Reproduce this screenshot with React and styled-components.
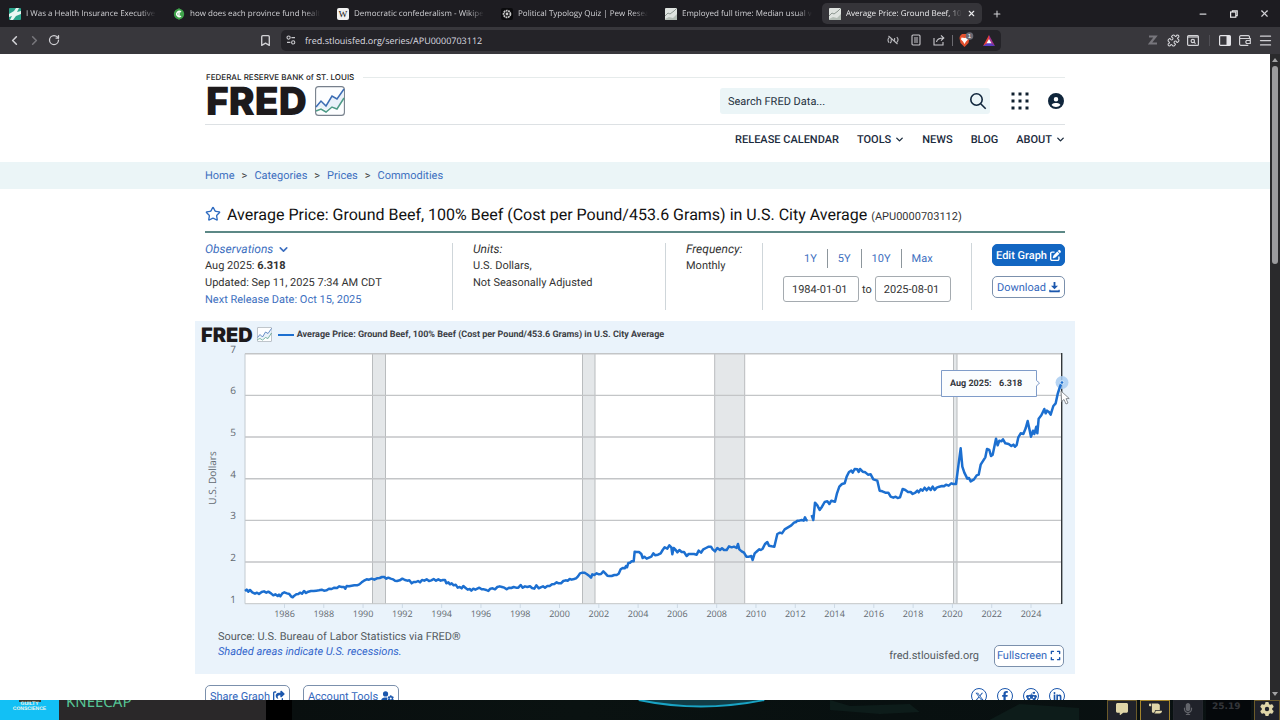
import React from "react";
import styled, { createGlobalStyle, css } from "styled-components";
import { Bookmark, ChevronLeft, ChevronRight, ChevronDown, RotateCw, Puzzle, Menu, X, Plus, Minus, Star } from "lucide-react";
import {
  FaCircleUser, FaPenToSquare, FaShareFromSquare, FaUserGear, FaExpand, FaXTwitter,
  FaFacebookF, FaRedditAlien, FaLinkedinIn, FaMessage, FaScroll, FaMicrophone, FaGear,
} from "react-icons/fa6";

const UI = `"Open Sans", "Noto Sans", sans-serif`;
const BODY = `Roboto, "Liberation Sans", sans-serif`;

const Global = createGlobalStyle`
  * { box-sizing: border-box; }
  body { margin: 0; font-family: ${BODY}; background: #0a0f10; text-rendering: geometricPrecision; }
  button, input { font-family: inherit; margin: 0; text-rendering: inherit; }
  button { cursor: pointer; }
  a { text-decoration: none; color: #3d6fc0; }
  svg { flex: none; display: block; }
`;

const Screen = styled.div`
  height: 100vh;
  display: flex;
  flex-direction: column;
  overflow: hidden;
`;

/* ---------- browser chrome ---------- */

const TabBar = styled.div`
  display: flex;
  align-items: center;
  height: 27px;
  flex: none;
  background: #1d1c21;
  color: #c6c6ca;
  font-family: ${UI};
`;

const Tabs = styled.div`
  display: flex;
  padding-left: 2px;
`;

const Tab = styled.button`
  display: flex;
  align-items: center;
  gap: 5px;
  width: 160px;
  height: 21px;
  margin-right: 4px;
  padding: 0 6px 0 7px;
  border: 0;
  border-radius: 5px;
  background: ${(p) => (p.$active ? "#353439" : "transparent")};
  color: ${(p) => (p.$active ? "#ececee" : "#d0d0d4")};
  font-size: 8px;
  text-align: left;
`;

const TabTitle = styled.span`
  flex: 1;
  min-width: 0;
  overflow: hidden;
  white-space: nowrap;
  line-height: 14px;
  mask-image: linear-gradient(90deg, #000 88%, transparent);
`;

const IconButton = styled.button`
  display: flex;
  align-items: center;
  justify-content: center;
  width: ${(p) => p.$w || 20}px;
  height: 20px;
  padding: 0;
  border: 0;
  background: none;
  color: ${(p) => p.$color || "#d2d2d6"};
`;

const WindowButtons = styled.div`
  display: flex;
  margin-left: auto;
`;

const Toolbar = styled.div`
  display: flex;
  align-items: center;
  height: 27px;
  flex: none;
  background: #38373c;
  color: #d2d2d6;
  padding: 0 5px 1px 4px;
`;

const NavButtons = styled.div`
  display: flex;
  flex: 251 1 0;
`;

const Address = styled.div`
  display: flex;
  align-items: center;
  gap: 3px;
  flex: 0 1 720px;
  height: 21px;
  margin-left: 6px;
  padding: 0 2px 0 5px;
  border-radius: 5px;
  background: #242328;
`;

const AddressInput = styled.input`
  flex: 1;
  min-width: 0;
  padding: 0 0 0 6px;
  border: 0;
  outline: 0;
  background: none;
  color: #dcdce0;
  font-family: ${UI};
  font-size: 9px;
`;

const AddressDivider = styled.span`
  width: 1px;
  height: 11px;
  background: ${(p) => p.$color || "#6b6a70"};
`;

const Extensions = styled.div`
  display: flex;
  flex: 274 1 0;
  align-items: center;
  justify-content: flex-end;
`;

const Viewport = styled.div`
  display: flex;
  flex: 1;
  min-height: 0;
  background: #fff;
`;

const Page = styled.div`
  flex: 1;
  min-width: 0;
  overflow: hidden;
`;

const ScrollTrack = styled.div`
  display: flex;
  flex-direction: column;
  align-items: center;
  justify-content: space-between;
  width: 10px;
  background: #2a2a2c;
  padding: 4px 0;
`;

const ScrollThumb = styled.div`
  width: 6px;
  height: 31%;
  margin: 4px 0 auto;
  border-radius: 3px;
  background: #9c9c9e;
`;

/* ---------- page ---------- */

const Wrap = styled.div`
  width: 860px;
  max-width: 100%;
  margin: 0 auto;
`;

const BrandLine = styled.div`
  display: flex;
  align-items: center;
  gap: 9px;
  padding: 17px 0 0 1px;
  height: 29px;
  color: #222;
  font-family: Inter, sans-serif;
  font-size: 8px;
  font-weight: 500;
  line-height: 10px;
  white-space: nowrap;
  &::after { content: ""; flex: 1; height: 1px; background: #e6ebeb; }
`;

const HeaderRow = styled.div`
  display: flex;
  align-items: center;
  height: 42px;
  padding: 0 0 5px 1px;
  border-bottom: 1px solid #dde1e4;
`;

const Wordmark = styled.span`
  color: #1d1a1c;
  font-family: Inter, sans-serif;
  font-weight: 900;
  font-size: ${(p) => p.$size}px;
  line-height: 1;
`;

const Logo = styled.a`
  display: flex;
  align-items: center;
  gap: ${(p) => p.$gap}px;
`;

const SearchBox = styled.form`
  display: flex;
  align-items: center;
  width: 270px;
  height: 26px;
  margin-left: auto;
  padding: 0 2px 0 8px;
  border-radius: 3px;
  background: #ebf5f7;
`;

const SearchInput = styled.input`
  flex: 1;
  min-width: 0;
  padding: 0;
  border: 0;
  outline: 0;
  background: none;
  color: #26323f;
  font-size: 11px;
  &::placeholder { color: #26323f; opacity: 1; }
`;

const HeaderIcons = styled.div`
  display: flex;
  gap: 17px;
  margin-left: 20px;
`;

const MainNav = styled.nav`
  display: flex;
  justify-content: flex-end;
  gap: 18px;
  height: 37px;
  padding-top: 6px;
  a {
    display: flex;
    align-items: center;
    gap: 3px;
    height: 17px;
    color: #1b2b3d;
    font-size: 11px;
    font-weight: 500;
  }
`;

const NavChevron = styled(ChevronDown)`
  margin-right: -1px;
`;

const CrumbBand = styled.div`
  background: #ebf5f7;
`;

const Crumbs = styled.nav`
  display: flex;
  align-items: center;
  gap: 7px;
  height: 27px;
  padding-bottom: 1px;
  color: #333;
  font-size: 11px;
`;

const TitleRow = styled.div`
  display: flex;
  align-items: center;
  gap: 6px;
  height: 44px;
  padding: 9px 0 1px;
  border-bottom: 2px solid #5c8886;
  white-space: nowrap;
`;

const Title = styled.h1`
  margin: 0;
  color: #111;
  font-size: 16px;
  font-weight: 400;
  small { color: #333; font-size: 11px; }
`;

const Meta = styled.div`
  display: grid;
  grid-template-columns: 247fr 213fr 97fr 209fr 94fr;
  padding: 10px 0 11px;
`;

const MetaCell = styled.div`
  min-height: 67px;
  color: #333;
  font-size: 11px;
  line-height: 17px;
  white-space: nowrap;
  & + & { padding-left: 20px; border-left: 1px solid #cfd6da; }
`;

const MetaLabel = styled.div`
  display: flex;
  align-items: center;
  gap: 4px;
  height: 12px;
  margin-bottom: 2px;
  font-size: 12px;
  line-height: 12px;
  font-style: italic;
`;

const Ranges = styled.div`
  display: flex;
  align-items: center;
  height: 19px;
  margin: 6px 0 8px 11px;
`;

const RangeButton = styled.button`
  height: 19px;
  padding: 0 10px;
  border: 0;
  background: none;
  color: #3d6fc0;
  font-size: 11px;
  & + & { border-left: 1px solid #8d969c; }
`;

const DateRow = styled.div`
  display: flex;
  align-items: center;
  gap: 3px;
`;

const DateInput = styled.input`
  width: 76px;
  height: 26px;
  padding: 0 8px;
  border: 1px solid #a5abb0;
  border-radius: 3px;
  color: #333;
  background: #fff;
  font-size: 11px;
`;

const Action = styled.button`
  display: flex;
  align-items: center;
  justify-content: center;
  gap: 3px;
  width: ${(p) => (p.$w ? p.$w + "px" : "100%")};
  height: 22px;
  margin: ${(p) => (p.$stacked ? "1px 0 10px" : "0")};
  padding: 0;
  border: 1px solid #7b90ac;
  border-radius: 5px;
  background: #fff;
  color: #3468bd;
  font-size: 11px;
  white-space: nowrap;
  svg { color: #1b57ad; }
  ${(p) => p.$primary && css`
    border-color: #1266c2;
    background: #1266c2;
    color: #fff;
    font-weight: 500;
    svg { color: #fff; }
  `}
`;

const Panel = styled.section`
  margin: 0 -10px;
  background: #eaf3fb;
`;

const PanelHead = styled.div`
  display: flex;
  align-items: center;
  height: 22px;
  padding: 5px 6px 0;
`;

const Legend = styled.div`
  display: flex;
  align-items: center;
  gap: 3px;
  margin-left: 6px;
  color: #3c4045;
  font-size: 9px;
  font-weight: 700;
  &::before { content: ""; width: 16px; height: 2px; background: #1c6fd0; }
`;

const Chart = styled.svg`
  width: 100%;
  height: auto;
`;

const PanelFoot = styled.div`
  display: flex;
  justify-content: space-between;
  height: 49px;
  padding: 0 11px 0 23px;
`;

const Source = styled.div`
  padding-top: 4px;
  color: #555b61;
  font-size: 11px;
  line-height: 15px;
  i { display: block; color: #3366cc; }
`;

const FootRight = styled.div`
  display: flex;
  align-items: center;
  gap: 15px;
  padding-top: 12px;
  color: #555b61;
  font-size: 11px;
`;

const ShareRow = styled.div`
  display: flex;
  gap: 13px;
  margin-top: 11px;
`;

const Socials = styled.div`
  display: flex;
  gap: 10px;
  margin-left: auto;
  padding-top: 3px;
`;

const Social = styled.a`
  display: flex;
  align-items: center;
  justify-content: center;
  width: 16px;
  height: 16px;
  border: 1px solid #1b57ad;
  border-radius: 50%;
  color: #1b57ad;
`;

/* ---------- strip under the browser window ---------- */

const Strip = styled.footer`
  display: flex;
  height: 20px;
  flex: none;
  overflow: hidden;
  background: linear-gradient(90deg, #080c0d, #0a1211 45%, #081010 70%, #0a1112);
`;

const Cover = styled.div`
  width: 59px;
  background: #12c0f5;
  display: flex;
  flex-direction: column;
  align-items: center;
  color: #f4f4ea;
  font: 700 5px/5px "Liberation Sans", sans-serif;
  &::before { content: ""; width: 22px; height: 2px; background: #373a30; }
`;

const Track = styled.div`
  width: 207px;
  padding-left: 7px;
  background: #2a2829;
  color: #56c596;
  font: 15px/5px "Noto Sans", sans-serif;
`;

const Gap = styled.div`
  width: 26px;
  background: #000;
`;

const Scene = styled.div`
  flex: 1;
  min-width: 0;
`;

const Tools = styled.div`
  display: flex;
  gap: 3px;
`;

const Tool = styled.button`
  display: flex;
  align-items: center;
  justify-content: center;
  width: ${(p) => p.$w || 30}px;
  height: 24px;
  padding: 0 0 7px;
  border: 1px solid ${(p) => p.$edge || "#6b5a2a"};
  background: #20222a;
  color: ${(p) => p.$color || "#e0d6a8"};
`;

const Clock = styled.span`
  width: 45px;
  padding-left: 6px;
  background: #05080b;
  color: #34363a;
  font: 700 9px/15px "DejaVu Sans", sans-serif;
`;

/* ---------- data ---------- */

const TABS = [
  ["I Was a Health Insurance Executive. What I saw", "story"],
  ["how does each province fund healthcare", "leaf"],
  ["Democratic confederalism - Wikipedia", "wiki"],
  ["Political Typology Quiz | Pew Research", "pew"],
  ["Employed full time: Median usual weekly", "fred"],
  ["Average Price: Ground Beef, 100% Beef", "fred"],
];

// Traced in thirds of a chart unit; the break is the missing October 2012 value.
const EARLY = `150,813 155,809 160,815 165,810 172,817 180,821 186,818 192,822 200,816 207,814 214,818 220,815 228,820 235,826 241,823 248,828 252,824 256,829 262,820 268,817 276,820 283,822 288,829 293,832 298,827 304,823 310,822 315,818 321,821 327,813 333,819 340,815 348,813 356,813 364,812 372,811 380,809 387,812 395,811 402,806 410,807 418,803 426,804 433,799 440,801 447,801 451,806 455,798 462,799 470,797 478,796 486,796 493,793 500,787 507,782 515,778 522,779 530,776 538,779 546,775 554,774 561,771 568,771 574,776 580,773 587,776 594,778 600,782 606,783 614,781 622,776 630,780 637,782 643,781 650,790 656,786 663,786 669,783 675,787 681,780 688,782 695,778 702,783 709,781 716,777 723,782 730,778 737,782 744,780 750,780 754,790 760,787 765,793 770,790 776,796 782,794 788,803 794,801 800,805 805,798 811,803 818,809 824,807 829,812 835,806 841,809 847,806 853,803 860,808 867,808 874,810 880,813 886,806 893,805 900,808 907,801 914,799 921,801 928,803 935,808 942,803 949,804 956,801 963,803 970,803 977,795 983,803 990,799 997,801 1005,799 1011,804 1018,806 1024,796 1031,805 1037,802 1044,799 1050,803 1057,798 1064,798 1071,793 1078,792 1085,787 1091,790 1098,790 1105,783 1112,781 1118,782 1124,777 1130,779 1137,777 1143,775 1149,769 1155,760 1162,758 1168,758 1175,762 1182,767 1188,773 1192,763 1198,765 1205,760 1212,763 1218,762 1225,754 1231,760 1237,767 1243,768 1250,768 1258,765 1265,765 1271,761 1277,748 1283,744 1289,745 1293,738 1296,742 1300,729`;
const MIDDLE = `0,728 5,724 11,724 14,695 20,696 27,696 34,702 38,714 43,710 50,716 57,713 64,710 70,700 76,706 84,704 92,700 98,690 104,682 112,686 118,676 124,682 127,703 131,684 137,690 142,697 148,690 155,696 162,696 170,708 176,702 184,702 192,702 200,704 206,692 213,698 220,688 228,684 236,680 243,680 248,688 255,694 262,684 270,690 276,685 282,690 290,690 297,679 305,682 312,680 320,684 324,672 328,688 335,694 342,698 349,710 357,710 364,708 368,720 374,700 382,693 388,688 392,690 398,686 405,672 412,666 417,677 425,679 433,680 442,642 450,638 456,640 464,628 474,622 484,616 492,608 498,606 502,602 508,602 515,600 521,602 525,592 529,601 533,601`;
const LATE = `545,585 550,600 555,548 562,556 569,570 576,560 584,546 592,544 598,552 604,542 615,545 621,520 628,500 636,492 644,490 650,470 657,456 664,452 668,458 674,447 682,448 686,456 690,447 698,455 706,457 714,464 722,463 730,478 742,482 749,512 757,514 766,518 775,518 782,530 790,533 797,530 803,534 810,532 818,507 826,510 834,516 842,516 848,522 856,518 862,512 866,517 872,508 878,512 884,503 890,511 896,503 902,510 908,500 914,510 920,503 928,500 936,498 942,499 948,494 956,497 964,490 970,492 978,492 986,430 992,385 997,440 1003,458 1012,476 1017,474 1022,484 1032,478 1040,466 1046,464 1052,434 1062,418 1066,412 1071,387 1078,390 1083,408 1088,404 1098,356 1103,376 1108,362 1114,364 1119,358 1126,370 1136,372 1144,378 1150,374 1155,380 1160,375 1165,352 1172,340 1180,342 1187,325 1193,303 1198,326 1203,350 1209,332 1213,342 1219,320 1222,340 1226,296 1234,286 1243,267 1247,280 1251,272 1257,276 1262,284 1270,258 1277,250 1283,222 1290,200 1296,186`;

const trace = (text, dx) =>
  text.split(" ").map((pair) => {
    const [x, y] = pair.split(",").map(Number);
    return `${((x + dx) / 3).toFixed(2)},${(y / 3).toFixed(2)}`;
  }).join(" ");

const LINES = [`${trace(EARLY, 0)} ${trace(MIDDLE, 1305)}`, trace(LATE, 1305)];
const RECESSIONS = [[177.5, 13], [387.5, 12.5], [519.7, 30], [758.5, 3.5]];
const YEARS = Array.from({ length: 20 }, (_, i) => 1986 + i * 2);
const yearX = (y) => 50.2 + (y - 1984) * 19.645;
const valueY = (v) => 283.7 - (v - 1) * 41.67;

/* ---------- icons ---------- */

function Favicon({ kind }) {
  return (
    <svg width="12" height="12" viewBox="0 0 12 12">
      {kind === "story" && (
        <g><rect width="12" height="12" rx="1" fill="#2aa38b" /><path d="M0 6l5-3 2-3h3l-2 4 4-1v3L7 8l-3 4H1l2-4-3 1z" fill="#e9f6f2" /></g>
      )}
      {kind === "leaf" && (
        <g><circle cx="6" cy="6" r="5.2" fill="#3fa24b" /><path d="M6 0l2 2H4zM6 12l2-2H4z" fill="#3fa24b" /><path d="M8 4a2.6 2.6 0 1 0 0 4M6 3v5" stroke="#fff" strokeWidth="1.4" fill="none" /></g>
      )}
      {kind === "wiki" && (
        <g><rect width="12" height="12" rx="2" fill="#f2f2f2" /><text x="6" y="9" fontSize="9" fontFamily="Liberation Serif, serif" textAnchor="middle" fill="#222">W</text></g>
      )}
      {kind === "pew" && (
        <g><rect width="12" height="12" rx="2" fill="#0b0b0d" /><circle cx="6" cy="6" r="3.4" fill="none" stroke="#c9c9c9" strokeWidth="1.8" strokeDasharray="1.8 .6" /><circle cx="6" cy="6" r="1.4" fill="#c9c9c9" /></g>
      )}
      {kind === "fred" && (
        <g><rect width="12" height="12" rx="1" fill="#dfe3e0" /><path d="M0 8l3-3 2 1 4-3 3-3" stroke="#8d9791" strokeWidth="1" fill="none" /><path d="M0 11l4-2 4 1 4-4v6H0z" fill="#b4bdb6" /></g>
      )}
    </svg>
  );
}

const FredMark = ({ size }) => (
  <svg width={size} height={size} viewBox="0 0 30 30">
    <rect x=".6" y=".6" width="28.8" height="28.8" rx="3" fill="#fdfeff" stroke="#77808c" strokeWidth="1.1" />
    <path d="M1 21l5-6 5 5 6-10 5 3 7-10v8l-7 11-5-2-6 4-6-3-4 2z" fill="#e9f1f9" />
    <path d="M1 21l5-6 5 5 6-10 5 3 7-10" fill="none" stroke="#3b6cb4" strokeWidth="1.5" />
    <path d="M1 25l5-2 5 3 6-5 5 2 7-11" fill="none" stroke="#4d9a86" strokeWidth="1.5" />
  </svg>
);

const SearchIcon = () => (
  <svg width="18" height="18" viewBox="0 0 18 18" fill="none" stroke="#10263c" strokeWidth="1.6">
    <circle cx="7.5" cy="7.5" r="5.7" /><path d="M11.7 11.7l5 5" />
  </svg>
);

const GridIcon = () => (
  <svg width="18" height="18" viewBox="0 0 18 18" fill="#10202f">
    {[0, 7, 14].map((y) => [0, 7, 14].map((x) => <rect key={`${x}-${y}`} x={x + 0.5} y={y + 0.5} width="3" height="3" />))}
  </svg>
);

const DownloadIcon = () => (
  <svg width="11" height="11" viewBox="0 0 12 12" fill="none" stroke="currentColor" strokeWidth="2">
    <path d="M6 0v5" /><path d="M2.2 4h7.6L6 8z" fill="currentColor" stroke="none" /><path d="M.4 10.200h11.200" /><path d="M1 8.400v2M11 8.400v2" strokeWidth="1.200" />
  </svg>
);

const SiteInfo = () => (
  <svg width="10" height="10" viewBox="0 0 10 10" fill="none" stroke="#c8c8cc" strokeWidth="1.1">
    <circle cx="2.6" cy="2.6" r="1.6" /><path d="M5.4 2.6H9M1 7.4h3.4" /><circle cx="7.2" cy="7.4" r="1.6" />
  </svg>
);

const MutedWave = () => (
  <svg width="12" height="12" viewBox="0 0 12 12" fill="none" stroke="#b9b9bd" strokeWidth="1.1">
    <path d="M1.500 2l9 8M2 3.600a4 4 0 0 0 0 5M4.200 5.200v2.600L3 9M7.600 4v2.500M9.800 3a4 4 0 0 1 0 5.400" />
  </svg>
);

const Reader = () => (
  <svg width="10" height="12" viewBox="0 0 10 12" fill="none" stroke="#c8c8cc" strokeWidth="1.1">
    <rect x="1" y="1" width="8" height="10" rx="1" /><path d="M3 4h4M3 6h4M3 8h4" />
  </svg>
);

const ShareOut = () => (
  <svg width="12" height="12" viewBox="0 0 12 12" fill="none" stroke="#c8c8cc" strokeWidth="1.1">
    <path d="M1 4v7h9V8M3.5 8c.5-3 3-4 7-4M8 1.4L10.8 4 8 6.6" />
  </svg>
);

const Shield = () => (
  <svg width="16" height="16" viewBox="0 0 16 16">
    <path d="M2 4l2-2h5l2 2 .5 2-1 5L6.500 15l-4-4-1-5z" fill="#e4512e" />
    <path d="M3.500 5.500l3 .5 3-.5.5 2-2 2L6.500 12 5 9.500l-2-2z" fill="#fff" />
    <circle cx="11.500" cy="4" r="3.800" fill="#6a6972" />
    <text x="11.500" y="6" fontSize="6" textAnchor="middle" fill="#fff" fontFamily="Liberation Sans, sans-serif">1</text>
  </svg>
);

const Triangle = () => (
  <svg width="12" height="11" viewBox="0 0 12 11">
    <path d="M6 0L0 11l6-3z" fill="#e8413b" /><path d="M6 0l6 11-6-3z" fill="#a0318e" /><path d="M0 11l6-4 6 4z" fill="#5a3fc4" /><path d="M6 4l2.500 4.200h-5z" fill="#fff" />
  </svg>
);

const ZMark = () => (
  <svg width="10" height="10" viewBox="0 0 10 10" fill="none" stroke="#77767c" strokeWidth="2.200">
    <path d="M1 1.500h6.500L2 8.500h7" />
  </svg>
);

const TabSearch = () => (
  <svg width="12" height="11" viewBox="0 0 12 11" fill="none" stroke="#d2d2d6" strokeWidth="1.200">
    <rect x=".6" y=".6" width="10.800" height="9.800" rx="1" /><path d="M1 2h10" /><circle cx="5.800" cy="6" r="1.700" /><path d="M7 7.200L8.500 8.700" />
  </svg>
);

const SidePanel = () => (
  <svg width="12" height="11" viewBox="0 0 12 11">
    <rect x=".6" y=".6" width="10.800" height="9.800" rx="1" fill="none" stroke="#e4e4e8" strokeWidth="1.200" /><path d="M7.500 1H11v9H7.500z" fill="#e4e4e8" />
  </svg>
);

const Wallet = () => (
  <svg width="12" height="11" viewBox="0 0 12 11" fill="none" stroke="#d2d2d6" strokeWidth="1.200">
    <path d="M10.500 3.500V2a1.200 1.200 0 0 0-1.200-1.300H1.800A1.200 1.200 0 0 0 .6 2v7a1.200 1.200 0 0 0 1.200 1.300h7.500M1 3.500h10.300v5H7.500a2 2 0 0 1 0-3h3.800" />
  </svg>
);

const Restore = () => (
  <svg width="8" height="8" viewBox="0 0 8 8" fill="none" stroke="#e6e6e8" strokeWidth="1.200">
    <rect x=".6" y="2" width="5.200" height="5.200" /><path d="M2.400 2V.8h4.800v4.800H6" />
  </svg>
);

const Caret = ({ down }) => (
  <svg width="6" height="4" viewBox="0 0 6 4"><path d={down ? "M0 0h6L3 4z" : "M0 4h6L3 0z"} fill="#a2a2a4" /></svg>
);

/* ---------- chart ---------- */

const AxisText = styled.text`
  font-family: "Open Sans", sans-serif;
  font-size: ${(p) => p.$size}px;
  fill: #626970;
  text-anchor: middle;
`;

const TipText = styled.text`
  font-size: 9px;
  font-weight: 700;
  fill: #33373c;
`;

function PriceChart() {
  return (
    <Chart viewBox="0 23 880 282" role="img" aria-label="Ground beef price by month">
      <rect x="50" y="33.700" width="817" height="250" fill="#fff" />
      {RECESSIONS.map(([x, w]) => (
        <g key={x}>
          <rect x={x} y="33.700" width={w} height="250" fill="#e4e7e9" />
          <path d={`M${x} 33.700v250M${x + w} 33.700v250`} stroke="#b9bcbe" strokeWidth="1" />
        </g>
      ))}
      {[1, 2, 3, 4, 5, 6, 7].map((v) => (
        <g key={v}>
          <path d={`M50 ${valueY(v)}H867`} stroke="#c3c5c7" strokeWidth={v === 1 ? 1 : 1.4} />
          <AxisText $size={10} x="38" y={valueY(v) - 1}>{v}</AxisText>
        </g>
      ))}
      <path d="M50 33.700v250" stroke="#c3cad0" />
      {YEARS.map((y) => (
        <g key={y}>
          <path d={`M${yearX(y)} 284v4`} stroke="#cdd9e4" />
          <AxisText $size={9} x={yearX(y)} y="297">{y}</AxisText>
        </g>
      ))}
      <AxisText $size={10} transform="translate(21 158) rotate(-90)">U.S. Dollars</AxisText>
      <path d="M866.700 33v251" stroke="#33373b" strokeWidth="1.400" />
      <circle cx="867" cy="62.500" r="6.500" fill="#a9cdf1" opacity=".85" />
      {LINES.map((points) => (
        <polyline key={points.length} points={points} fill="none" stroke="#1c6fd0" strokeWidth="2.500" strokeLinejoin="round" />
      ))}
      <circle cx="867" cy="62.500" r="1.800" fill="#1c6fd0" stroke="#d9ebfb" strokeWidth="1" />
      <path d="M746.500 50.500h95v10l3 2.500-3 3v10.500h-95z" fill="#fbfdfe" stroke="#7f9cc9" />
      <TipText x="755" y="66">Aug 2025:</TipText>
      <TipText x="804" y="66">6.318</TipText>
      <path d="M866 71l.5 10.500 2.500-2 2 4.500 2-1-2-4.300 3.200-.2z" fill="#fff" stroke="#6d7277" strokeWidth=".8" />
    </Chart>
  );
}

export default function App() {
  const crumbs = ["Home", "Categories", "Prices", "Commodities"];
  return (
    <Screen>
      <Global />
      <TabBar>
        <Tabs>
          {TABS.map(([title, kind], i) => (
            <Tab key={title} $active={i === 5}>
              <Favicon kind={kind} />
              <TabTitle>{title}</TabTitle>
              {i === 5 && <X size={9} strokeWidth={3} />}
            </Tab>
          ))}
        </Tabs>
        <IconButton $w={22} aria-label="New tab"><Plus size={10} strokeWidth={2.5} /></IconButton>
        <WindowButtons>
          <IconButton $w={30} aria-label="Minimize"><Minus size={10} strokeWidth={3} /></IconButton>
          <IconButton $w={31} aria-label="Restore"><Restore /></IconButton>
          <IconButton $w={31} aria-label="Close"><X size={11} strokeWidth={2.5} /></IconButton>
        </WindowButtons>
      </TabBar>

      <Toolbar>
        <NavButtons>
          <IconButton aria-label="Back"><ChevronLeft size={15} strokeWidth={2.5} /></IconButton>
          <IconButton $color="#77767b" aria-label="Forward"><ChevronRight size={15} strokeWidth={2.5} /></IconButton>
          <IconButton aria-label="Reload"><RotateCw size={12} strokeWidth={2.5} /></IconButton>
        </NavButtons>
        <IconButton aria-label="Bookmark"><Bookmark size={13} strokeWidth={2.5} /></IconButton>
        <Address>
          <SiteInfo />
          <AddressInput aria-label="Address" defaultValue="fred.stlouisfed.org/series/APU0000703112" />
          <IconButton aria-label="Muted"><MutedWave /></IconButton>
          <IconButton aria-label="Reader"><Reader /></IconButton>
          <IconButton aria-label="Share"><ShareOut /></IconButton>
          <AddressDivider />
          <IconButton aria-label="Shields"><Shield /></IconButton>
          <IconButton aria-label="Rewards"><Triangle /></IconButton>
        </Address>
        <Extensions>
          <IconButton aria-label="Extension"><ZMark /></IconButton>
          <IconButton aria-label="Extensions"><Puzzle size={13} strokeWidth={2} /></IconButton>
          <IconButton aria-label="Search tabs"><TabSearch /></IconButton>
          <IconButton $w={12} as="span"><AddressDivider $color="#504f55" /></IconButton>
          <IconButton aria-label="Side panel"><SidePanel /></IconButton>
          <IconButton aria-label="Wallet"><Wallet /></IconButton>
          <IconButton aria-label="Menu"><Menu size={15} strokeWidth={2} /></IconButton>
        </Extensions>
      </Toolbar>

      <Viewport>
        <Page>
          <Wrap as="header">
            <BrandLine>FEDERAL RESERVE BANK of ST. LOUIS</BrandLine>
            <HeaderRow>
              <Logo href="#" $gap={8}><Wordmark $size={39}>FRED</Wordmark><FredMark size={30} /></Logo>
              <SearchBox>
                <SearchInput aria-label="Search FRED data" placeholder="Search FRED Data..." />
                <IconButton type="button" aria-label="Search"><SearchIcon /></IconButton>
              </SearchBox>
              <HeaderIcons>
                <IconButton aria-label="Apps"><GridIcon /></IconButton>
                <IconButton $w={18} $color="#10263c" aria-label="Account"><FaCircleUser size={16} /></IconButton>
              </HeaderIcons>
            </HeaderRow>
            <MainNav>
              <a href="#">RELEASE CALENDAR</a>
              <a href="#">TOOLS <NavChevron size={11} strokeWidth={3} /></a>
              <a href="#">NEWS</a>
              <a href="#">BLOG</a>
              <a href="#">ABOUT <NavChevron size={11} strokeWidth={3} /></a>
            </MainNav>
          </Wrap>

          <CrumbBand>
            <Wrap>
              <Crumbs>
                {crumbs.map((c, i) => (
                  <React.Fragment key={c}>{i > 0 && <span>&gt;</span>}<a href="#">{c}</a></React.Fragment>
                ))}
              </Crumbs>
            </Wrap>
          </CrumbBand>

          <Wrap as="main">
            <TitleRow>
              <Star size={16} color="#2e6bc0" strokeWidth={2} />
              <Title>
                Average Price: Ground Beef, 100% Beef (Cost per Pound/453.6 Grams) in U.S. City Average <small>(APU0000703112)</small>
              </Title>
            </TitleRow>

            <Meta>
              <MetaCell>
                <MetaLabel as="a" href="#">Observations <ChevronDown size={13} strokeWidth={3} /></MetaLabel>
                <div>Aug 2025: <b>6.318</b></div>
                <div>Updated: Sep 11, 2025 7:34 AM CDT</div>
                <a href="#">Next Release Date: Oct 15, 2025</a>
              </MetaCell>
              <MetaCell>
                <MetaLabel>Units:</MetaLabel>
                <div>U.S. Dollars,</div>
                <div>Not Seasonally Adjusted</div>
              </MetaCell>
              <MetaCell>
                <MetaLabel>Frequency:</MetaLabel>
                <div>Monthly</div>
              </MetaCell>
              <MetaCell>
                <Ranges>
                  {["1Y", "5Y", "10Y", "Max"].map((r) => <RangeButton key={r}>{r}</RangeButton>)}
                </Ranges>
                <DateRow>
                  <DateInput aria-label="Start date" defaultValue="1984-01-01" />
                  to
                  <DateInput aria-label="End date" defaultValue="2025-08-01" />
                </DateRow>
              </MetaCell>
              <MetaCell>
                <Action $primary $stacked>Edit Graph <FaPenToSquare size={11} /></Action>
                <Action>Download <DownloadIcon /></Action>
              </MetaCell>
            </Meta>

            <Panel>
              <PanelHead>
                <Logo href="#" $gap={4}><Wordmark $size={20}>FRED</Wordmark><FredMark size={15} /></Logo>
                <Legend>Average Price: Ground Beef, 100% Beef (Cost per Pound/453.6 Grams) in U.S. City Average</Legend>
              </PanelHead>
              <PriceChart />
              <PanelFoot>
                <Source>
                  Source: U.S. Bureau of Labor Statistics via FRED®
                  <i>Shaded areas indicate U.S. recessions.</i>
                </Source>
                <FootRight>
                  fred.stlouisfed.org
                  <Action $w={70}>Fullscreen <FaExpand size={11} /></Action>
                </FootRight>
              </PanelFoot>
            </Panel>

            <ShareRow>
              <Action $w={85}>Share Graph <FaShareFromSquare size={12} /></Action>
              <Action $w={96}>Account Tools <FaUserGear size={13} /></Action>
              <Socials>
                <Social href="#" aria-label="X"><FaXTwitter size={9} /></Social>
                <Social href="#" aria-label="Facebook"><FaFacebookF size={10} /></Social>
                <Social href="#" aria-label="Reddit"><FaRedditAlien size={11} /></Social>
                <Social href="#" aria-label="LinkedIn"><FaLinkedinIn size={9} /></Social>
              </Socials>
            </ShareRow>
          </Wrap>
        </Page>
        <ScrollTrack>
          <Caret />
          <ScrollThumb />
          <Caret down />
        </ScrollTrack>
      </Viewport>

      <Strip>
        <Cover><span>GUILTY</span><span>CONSCIENCE</span></Cover>
        <Track>KNEECAP</Track>
        <Gap />
        <Scene>
          <svg width="100%" height="20" viewBox="0 0 818 20" preserveAspectRatio="none">
            <path d="M348 0q54 12 122 0z" fill="#123c46" />
            <path d="M348 0q62 13 126 0" fill="none" stroke="#19a3c4" strokeWidth="2" />
            <path d="M540 0l20 6 60-2 10 8-40 2-50-4zM700 20l30-16 60 4v12z" fill="#0d1c1a" />
          </svg>
        </Scene>
        <Tools>
          <Tool aria-label="Chat"><FaMessage size={12} /></Tool>
          <Tool aria-label="Log" $edge="#a3842c"><FaScroll size={13} /></Tool>
          <Tool aria-label="Microphone" $edge="#24262d" $color="#63656b"><FaMicrophone size={12} /></Tool>
          <Clock>25.19</Clock>
          <Tool $w={26} aria-label="Settings"><FaGear size={14} /></Tool>
        </Tools>
      </Strip>
    </Screen>
  );
}
